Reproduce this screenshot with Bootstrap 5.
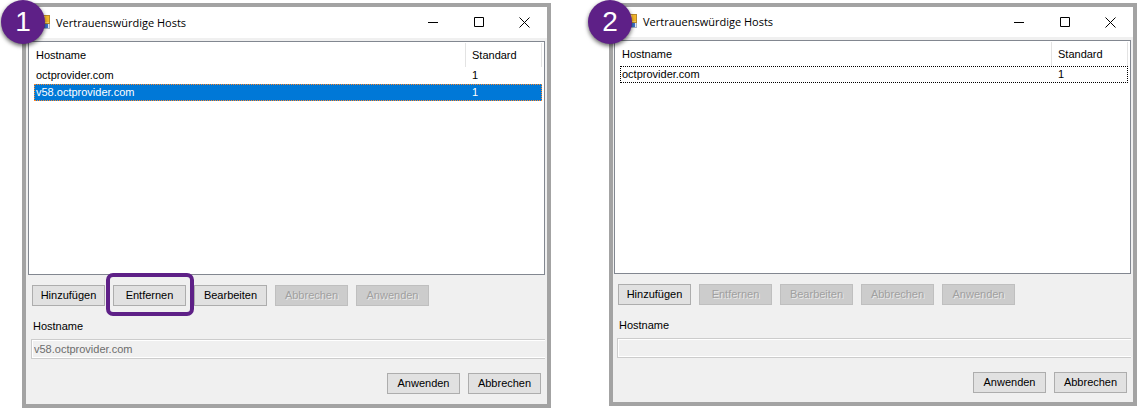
<!DOCTYPE html>
<html lang="de">
<head>
<meta charset="utf-8">
<meta name="viewport" content="width=device-width, initial-scale=1">
<title>Vertrauenswürdige Hosts</title>
<link rel="stylesheet" href="https://cdn.jsdelivr.net/npm/bootstrap@5.3.0/dist/css/bootstrap.min.css">
<style>
  body { font: 11px/15px "Liberation Sans", Arial, sans-serif; color: #000; background: #fff; }
  .steps { padding: 3px 0 0 22px; grid-template-columns: 529fr 528fr; column-gap: 58px; }
  .win { border: 4px solid #a3a3a3; background: #f0f0f0; }
  .step-badge {
    top: -7px; left: -25px; width: 44px; height: 44px; z-index: 2;
    background: #5e2087; color: #fff; font-size: 28px; line-height: 1;
    box-shadow: 0 2px 4px rgba(0,0,0,.6);
  }
  .titlebar { height: 30px; padding-left: 8px; background: #fff; }
  .titlebar h2 { font: 11px/16px "Open Sans", "Segoe UI", sans-serif; margin: 0 0 0 6px; }
  .caption-btn { width: 46px; height: 30px; border: 0; background: none; padding: 0; }
  .host-list { margin: 3px 2px 0 1px; padding: 1px 2px 0 5px; min-height: 234px; border: 1px solid #828790; background: #fff; }
  .host-list table { width: 100%; table-layout: fixed; border-collapse: separate; border-spacing: 0; }
  .host-list th { font-weight: 400; height: 24px; padding: 0 0 0 2px; border-right: 1px solid #e3e3e3; }
  .host-list td { height: 17px; line-height: 17px; padding: 0 0 0 2px; }
  .host-list th:last-child { width: 76px; padding-left: 6px; }
  .host-list td:last-child { padding-left: 6px; }
  .host-list tr.selected { background: #0078d7; color: #fff; outline: 1px dotted #ff8728; outline-offset: -1px; }
  .host-list tr.focused { outline: 1px dotted #000; outline-offset: -1px; }
  .tools { padding: 10px 5px 0; }
  .win-btn { width: 73px; height: 21px; padding: 0; border: 1px solid #adadad; background: #e1e1e1; color: #000; line-height: 19px; }
  .win-btn:disabled { border-color: #bfbfbf; background: #ccc; color: #a0a0a0; text-shadow: 1px 1px 0 #e8e8e8; }
  .highlight { inset: -12px -8px -10px -7px; border: 4px solid #5e2087; border-radius: 7px; pointer-events: none; }
  .field { padding: 13px 2px 0 4px; }
  .field label { display: block; padding-left: 2px; }
  .field input {
    width: 100%; height: 20px; margin-top: 5px; padding: 0 2px; font: inherit; color: #6d6d6d; border-radius: 0;
    background: #f0f0f0; border: 1px solid #ccc; border-right: 0; box-shadow: inset 1px 1px 0 #fff, inset 0 -1px 0 #fff;
  }
  .actions { padding: 14px 6px 9px; }
  .win-first .titlebar { height: 31px; }
  .win-first .host-list { margin: 3px 2px 0 2px; }
  .win-first .tools { padding-left: 6px; }
  .win-first .field { padding-left: 5px; }
  .win-first .actions { padding-bottom: 10px; }
</style>
</head>
<body>
<svg class="d-none">
  <symbol id="app" viewBox="0 0 16 16">
    <rect x="0" y="2" width="9" height="8" fill="#2f66b8"/><rect x="1" y="4" width="7" height="5" fill="#d9e7fa"/>
    <rect x="6" y="0" width="10" height="9" fill="#b98a2c"/><rect x="7" y="1" width="8" height="7" fill="#ffd65c"/><rect x="11" y="1" width="4" height="6" fill="#f7b92c"/>
    <rect x="4" y="9" width="12" height="5" fill="#a9b4c6"/><rect x="5" y="9" width="6" height="4" fill="#3c66ad"/><rect x="11" y="9" width="3" height="4" fill="#3f74d0"/><rect x="14" y="9" width="1" height="4" fill="#e6ebf5"/>
  </symbol>
  <symbol id="min" viewBox="0 0 11 11"><path d="M1 5.5h10" stroke="#000" fill="none"/></symbol>
  <symbol id="max" viewBox="0 0 11 11"><path d="M1.5 .5h9v9h-9z" stroke="#000" fill="none"/></symbol>
  <symbol id="close" viewBox="0 0 11 11"><path d="M.5 .5l10 10M10.5 .5l-10 10" stroke="#000" fill="none"/></symbol>
</svg>
<main class="steps d-grid align-items-start">

  <section class="win win-first position-relative">
    <span class="step-badge position-absolute rounded-circle d-flex align-items-center justify-content-center">1</span>
    <header class="titlebar d-flex align-items-center">
      <svg width="16" height="16"><use href="#app"/></svg>
      <h2 class="me-auto">Vertrauenswürdige Hosts</h2>
      <button class="caption-btn d-flex align-items-center justify-content-center" aria-label="Minimieren"><svg width="11" height="11"><use href="#min"/></svg></button>
      <button class="caption-btn d-flex align-items-center justify-content-center" aria-label="Maximieren"><svg width="11" height="11"><use href="#max"/></svg></button>
      <button class="caption-btn d-flex align-items-center justify-content-center" aria-label="Schließen"><svg width="11" height="11"><use href="#close"/></svg></button>
    </header>
    <div class="host-list">
      <table>
        <thead><tr><th>Hostname</th><th>Standard</th></tr></thead>
        <tbody>
          <tr><td>octprovider.com</td><td>1</td></tr>
          <tr class="selected"><td>v58.octprovider.com</td><td>1</td></tr>
        </tbody>
      </table>
    </div>
    <div class="tools d-flex gap-2">
      <button class="win-btn">Hinzufügen</button>
      <div class="position-relative d-flex">
        <button class="win-btn">Entfernen</button>
        <span class="highlight position-absolute z-1"></span>
      </div>
      <button class="win-btn">Bearbeiten</button>
      <button class="win-btn" disabled>Abbrechen</button>
      <button class="win-btn" disabled>Anwenden</button>
    </div>
    <div class="field">
      <label for="host1">Hostname</label>
      <input id="host1" type="text" class="d-block" value="v58.octprovider.com" disabled>
    </div>
    <div class="actions d-flex justify-content-end gap-2">
      <button class="win-btn">Anwenden</button>
      <button class="win-btn">Abbrechen</button>
    </div>
  </section>

  <section class="win position-relative">
    <span class="step-badge position-absolute rounded-circle d-flex align-items-center justify-content-center">2</span>
    <header class="titlebar d-flex align-items-center">
      <svg width="16" height="16"><use href="#app"/></svg>
      <h2 class="me-auto">Vertrauenswürdige Hosts</h2>
      <button class="caption-btn d-flex align-items-center justify-content-center" aria-label="Minimieren"><svg width="11" height="11"><use href="#min"/></svg></button>
      <button class="caption-btn d-flex align-items-center justify-content-center" aria-label="Maximieren"><svg width="11" height="11"><use href="#max"/></svg></button>
      <button class="caption-btn d-flex align-items-center justify-content-center" aria-label="Schließen"><svg width="11" height="11"><use href="#close"/></svg></button>
    </header>
    <div class="host-list">
      <table>
        <thead><tr><th>Hostname</th><th>Standard</th></tr></thead>
        <tbody>
          <tr class="focused"><td>octprovider.com</td><td>1</td></tr>
        </tbody>
      </table>
    </div>
    <div class="tools d-flex gap-2">
      <button class="win-btn">Hinzufügen</button>
      <button class="win-btn" disabled>Entfernen</button>
      <button class="win-btn" disabled>Bearbeiten</button>
      <button class="win-btn" disabled>Abbrechen</button>
      <button class="win-btn" disabled>Anwenden</button>
    </div>
    <div class="field">
      <label for="host2">Hostname</label>
      <input id="host2" type="text" class="d-block" disabled>
    </div>
    <div class="actions d-flex justify-content-end gap-2">
      <button class="win-btn">Anwenden</button>
      <button class="win-btn">Abbrechen</button>
    </div>
  </section>

</main>
<script src="https://cdn.jsdelivr.net/npm/bootstrap@5.3.0/dist/js/bootstrap.bundle.min.js"></script>
</body>
</html>
